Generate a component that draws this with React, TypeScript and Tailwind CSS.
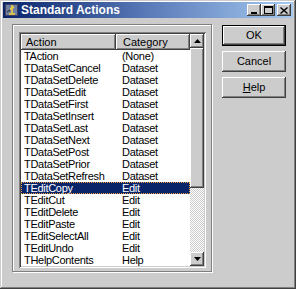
import React from 'react';

const rows: [string, string][] = [
  ['TAction', '(None)'],
  ['TDataSetCancel', 'Dataset'],
  ['TDataSetDelete', 'Dataset'],
  ['TDataSetEdit', 'Dataset'],
  ['TDataSetFirst', 'Dataset'],
  ['TDataSetInsert', 'Dataset'],
  ['TDataSetLast', 'Dataset'],
  ['TDataSetNext', 'Dataset'],
  ['TDataSetPost', 'Dataset'],
  ['TDataSetPrior', 'Dataset'],
  ['TDataSetRefresh', 'Dataset'],
  ['TEditCopy', 'Edit'],
  ['TEditCut', 'Edit'],
  ['TEditDelete', 'Edit'],
  ['TEditPaste', 'Edit'],
  ['TEditSelectAll', 'Edit'],
  ['TEditUndo', 'Edit'],
  ['THelpContents', 'Help'],
];

const raised =
  'shadow-[inset_-1px_-1px_0_#404040,inset_1px_1px_0_#ffffff,inset_-2px_-2px_0_#808080,inset_2px_2px_0_#cccccc]';

// Small caption buttons (min / max / close)
const CaptionButton: React.FC<{ children: React.ReactNode }> = ({ children }) => (
  <div className={`w-[14px] h-[12px] bg-[#cccccc] flex items-center justify-center ${raised}`}>
    {children}
  </div>
);

const DialogButton: React.FC<{ children: React.ReactNode; isDefault?: boolean }> = ({ children, isDefault }) => (
  <div
    className={`w-[64px] h-[21px] flex items-center justify-center bg-[#cccccc] text-[11px] text-black ${
      isDefault ? 'border border-black' : ''
    } ${raised}`}
  >
    {children}
  </div>
);

export default function App() {
  return (
    <div
      className="w-[296px] h-[289px] bg-[#cccccc] flex flex-col pt-[2px] px-[3px] pb-[3px] shadow-[inset_-1px_-1px_0_#404040,inset_1px_1px_0_#cccccc,inset_-2px_-2px_0_#808080,inset_2px_2px_0_#ffffff] select-none"
      style={{ fontFamily: '"Liberation Sans", Arial, sans-serif' }}
    >
      {/* Title bar */}
      <div className="h-[16px] flex items-center bg-gradient-to-r from-[#0a246a] via-[#5a7ab8] to-[#a6caf0] pl-[1px] pr-[2px]">
        <svg width="16" height="14" viewBox="0 0 16 14" className="shrink-0">
          <rect x="1" y="1" width="13" height="12" fill="#404060" />
          <rect x="2" y="2" width="11" height="10" fill="#7080a0" />
          <path d="M8 2 L8 11 M5 11 L11 11 M6 6 L10 4" stroke="#f0d040" strokeWidth="1.5" fill="none" />
          <path d="M3 9 L6 7" stroke="#202020" strokeWidth="1" />
        </svg>
        <span className="ml-[1px] text-white font-bold text-[12px]">Standard Actions</span>
        <div className="ml-auto flex items-center">
          <CaptionButton>
            <div className="w-[6px] h-[2px] bg-black mt-[5px] -ml-[1px]" />
          </CaptionButton>
          <CaptionButton>
            <div className="w-[9px] h-[8px] border border-black border-t-2" />
          </CaptionButton>
          <div className="ml-[2px]">
            <CaptionButton>
              <svg width="8" height="7" viewBox="0 0 8 7">
                <path d="M0.5 0.5 L7.5 6.5 M7.5 0.5 L0.5 6.5" stroke="#000" strokeWidth="1.4" />
              </svg>
            </CaptionButton>
          </div>
        </div>
      </div>

      {/* Client area */}
      <div className="flex flex-1 pt-[6px] pl-[9px]">
        {/* Etched panel */}
        <div className="w-[200px] h-[248px] border border-[#808080] shadow-[inset_1px_1px_0_#ffffff,1px_1px_0_#ffffff] pt-[7px] pl-[6px]">
          {/* List view */}
          <div className="w-[187px] h-[236px] flex shadow-[inset_1px_1px_0_#808080,inset_-1px_-1px_0_#ffffff,inset_2px_2px_0_#404040,inset_-2px_-2px_0_#cccccc] p-[2px] bg-white">
            <div className="flex flex-col w-[169px]">
              <div className="flex h-[16px] text-[11px] text-black">
                <div className={`w-[95px] bg-[#cccccc] pl-[5px] flex items-center ${raised}`}>Action</div>
                <div className={`w-[74px] bg-[#cccccc] pl-[7px] flex items-center ${raised}`}>Category</div>
              </div>
              {rows.map(([name, cat]) => {
                const sel = name === 'TEditCopy';
                return (
                  <div
                    key={name}
                    className={`flex h-[12px] text-[11px] leading-[12px] tracking-[-0.3px] ${
                      sel ? 'bg-[#0a246a] text-white outline outline-1 outline-dotted outline-[#e8a040] -outline-offset-1' : 'text-black'
                    }`}
                  >
                    <div className="w-[95px] pl-[3px]">{name}</div>
                    <div className="w-[74px] pl-[6px]">{cat}</div>
                  </div>
                );
              })}
            </div>

            {/* Scrollbar */}
            <div className="w-[14px] flex flex-col">
              <div className={`h-[14px] bg-[#cccccc] flex items-center justify-center ${raised}`}>
                <svg width="7" height="4" viewBox="0 0 7 4">
                  <path d="M3.5 0 L7 4 L0 4 Z" fill="#000" />
                </svg>
              </div>
              <div className={`h-[140px] bg-[#cccccc] ${raised}`} />
              <div className="flex-1 bg-[repeating-conic-gradient(#ffffff_0%_25%,#cccccc_0%_50%)] bg-[length:2px_2px]" />
              <div className={`h-[14px] bg-[#cccccc] flex items-center justify-center ${raised}`}>
                <svg width="7" height="4" viewBox="0 0 7 4">
                  <path d="M0 0 L7 0 L3.5 4 Z" fill="#000" />
                </svg>
              </div>
            </div>
          </div>
        </div>

        {/* Buttons */}
        <div className="flex flex-col gap-[5px] ml-[10px] pt-[1px]">
          <DialogButton isDefault>OK</DialogButton>
          <DialogButton>Cancel</DialogButton>
          <DialogButton>
            <span>
              <span className="underline">H</span>elp
            </span>
          </DialogButton>
        </div>
      </div>
    </div>
  );
}
